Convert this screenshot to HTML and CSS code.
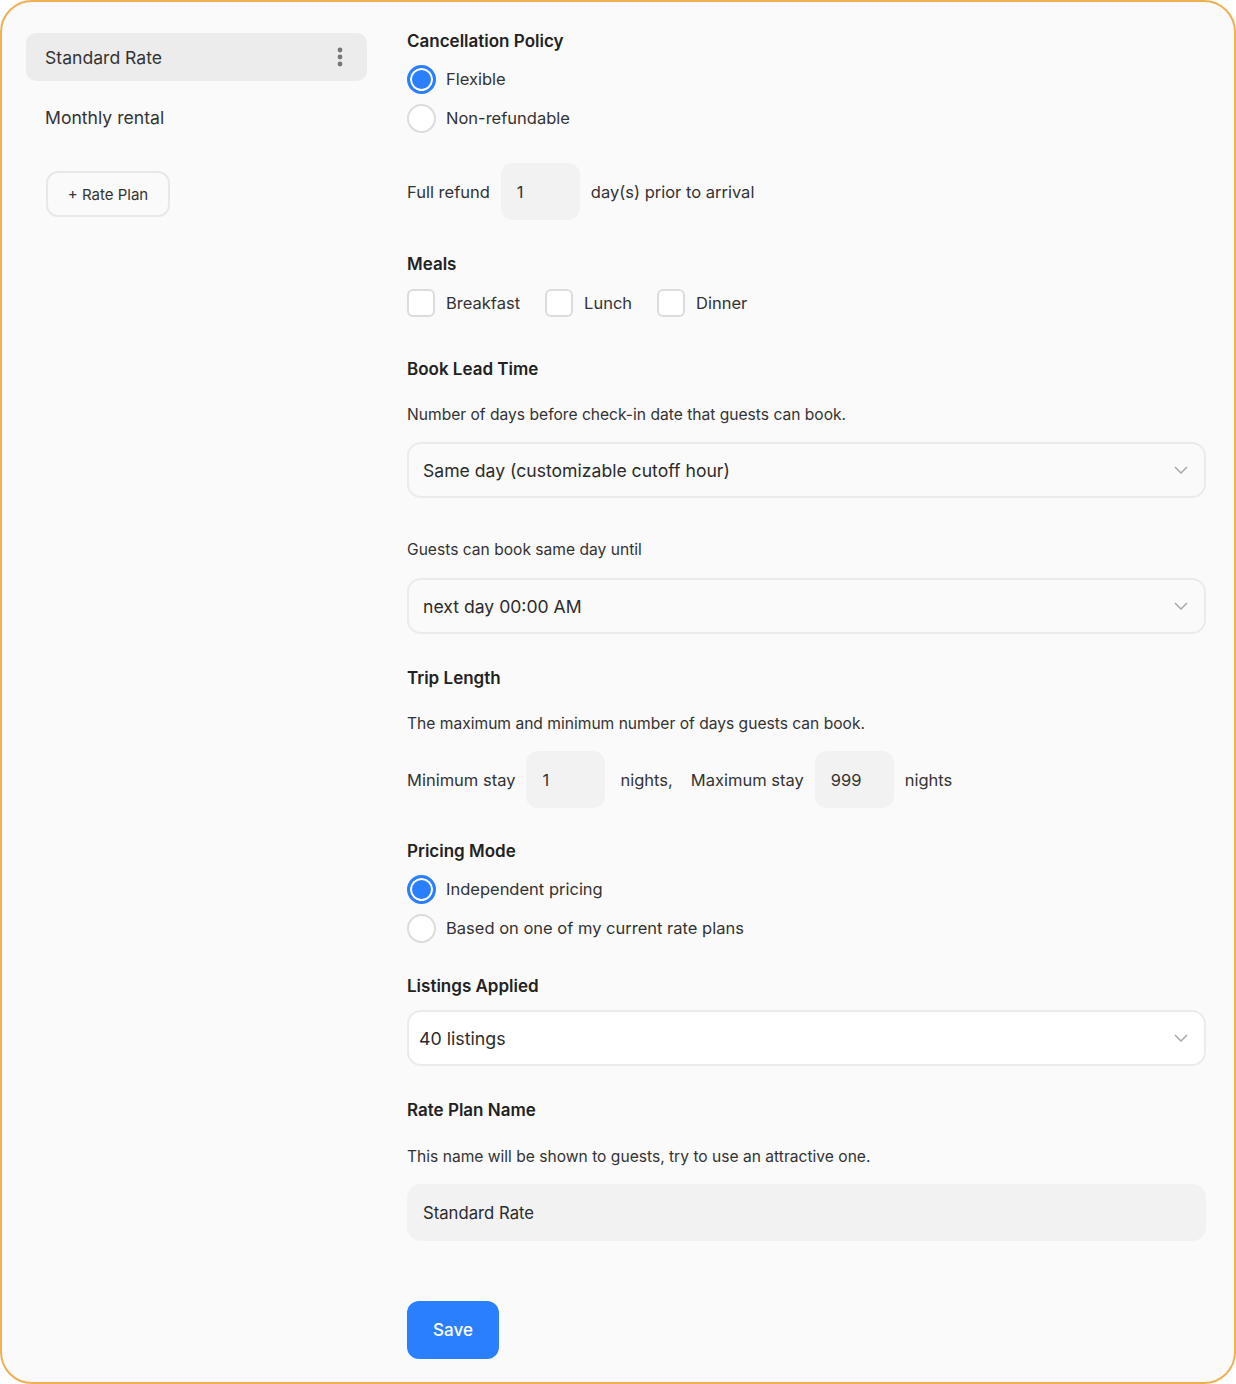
FILE: index.html
```html
<!DOCTYPE html>
<html lang="en">
<head>
<meta charset="utf-8">
<title>Rate Plans</title>
<link rel="stylesheet" href="styles.css">
</head>
<body>
<div class="frame">
  <aside class="sidebar">
    <div class="plan-item active">
      <span>Standard Rate</span>
      <svg class="kebab" width="6" height="20" viewBox="0 0 6 20"><circle cx="3" cy="3" r="2.4"/><circle cx="3" cy="10" r="2.4"/><circle cx="3" cy="17" r="2.4"/></svg>
    </div>
    <div class="plan-item"><span>Monthly rental</span></div>
    <button class="add-btn">+ Rate Plan</button>
  </aside>

  <main class="main">
    <h3 class="heading h-first">Cancellation Policy</h3>
    <div class="radio-group">
      <label class="option"><span class="radio checked"></span>Flexible</label>
      <label class="option"><span class="radio"></span>Non-refundable</label>
    </div>
    <div class="inline-row refund-row">
      <span>Full refund</span>
      <span class="num-box">1</span>
      <span>day(s) prior to arrival</span>
    </div>

    <h3 class="heading h-meals">Meals</h3>
    <div class="check-row">
      <label class="option"><span class="checkbox"></span>Breakfast</label>
      <label class="option"><span class="checkbox"></span>Lunch</label>
      <label class="option"><span class="checkbox"></span>Dinner</label>
    </div>

    <h3 class="heading h-lead">Book Lead Time</h3>
    <p class="desc">Number of days before check-in date that guests can book.</p>
    <div class="select">
      <span>Same day (customizable cutoff hour)</span>
      <svg class="chev" width="14" height="8" viewBox="0 0 14 8"><path d="M1 1l6 6 6-6"/></svg>
    </div>
    <p class="desc desc-gap">Guests can book same day until</p>
    <div class="select select-2">
      <span>next day 00:00 AM</span>
      <svg class="chev" width="14" height="8" viewBox="0 0 14 8"><path d="M1 1l6 6 6-6"/></svg>
    </div>

    <h3 class="heading">Trip Length</h3>
    <p class="desc">The maximum and minimum number of days guests can book.</p>
    <div class="inline-row trip-row">
      <span>Minimum stay</span>
      <span class="num-box">1</span>
      <span class="after">nights,</span>
      <span class="gap-l">Maximum stay</span>
      <span class="num-box">999</span>
      <span>nights</span>
    </div>

    <h3 class="heading h-pricing">Pricing Mode</h3>
    <div class="radio-group">
      <label class="option"><span class="radio checked"></span>Independent pricing</label>
      <label class="option"><span class="radio"></span>Based on one of my current rate plans</label>
    </div>

    <h3 class="heading h-list">Listings Applied</h3>
    <div class="select select-white">
      <span>40 listings</span>
      <svg class="chev" width="14" height="8" viewBox="0 0 14 8"><path d="M1 1l6 6 6-6"/></svg>
    </div>

    <h3 class="heading">Rate Plan Name</h3>
    <p class="desc desc-rpn">This name will be shown to guests, try to use an attractive one.</p>
    <div class="text-input">Standard Rate</div>

    <button class="save-btn">Save</button>
  </main>
</div>
</body>
</html>
```

FILE: styles.css
```css
* { box-sizing: border-box; }
html, body { margin: 0; padding: 0; background: #ffffff; }
body {
  font-family: Inter, "Noto Sans", "Liberation Sans", sans-serif;
  color: #2e2e2e;
  width: 1236px;
  height: 1384px;
}
.frame {
  width: 1236px;
  height: 1384px;
  border: 2px solid #eeaf55;
  border-radius: 32px;
  background: #fafafa;
  display: grid;
  grid-template-columns: 341px 799px;
  column-gap: 40px;
  padding: 28px 28px 0 24px;
  align-items: start;
}
.sidebar {
  padding-top: 3px;
  display: flex;
  flex-direction: column;
  gap: 12px;
}
.plan-item {
  height: 48px;
  border-radius: 10px;
  padding: 0 20px 0 19px;
  display: flex;
  align-items: center;
  justify-content: space-between;
  font-size: 17.6px;
  color: #333;
}
.plan-item.active { background: #ececec; }
.kebab { fill: #777; margin-right: 4px; }
.add-btn {
  align-self: flex-start;
  margin-top: 18px;
  margin-left: 20px;
  width: 124px;
  height: 46px;
  border: 2px solid #e8e8e8;
  border-radius: 12px;
  background: #fafafa;
  font-family: inherit;
  font-size: 15px;
  color: #333;
}
.main { display: flex; flex-direction: column; align-items: flex-start; }
.heading {
  margin: 33px 0 0;
  font-size: 17px;
  line-height: 22px;
  font-weight: 600;
  color: #222;
}
.h-first { margin-top: 0; }
.h-lead { margin-top: 40px; }
.h-pricing { margin-top: 32px; }
.h-list { margin-top: 32px; }
.radio-group {
  margin-top: 12px;
  display: flex;
  flex-direction: column;
  gap: 9px;
}
.option {
  display: flex;
  align-items: center;
  height: 30px;
  font-size: 16.5px;
  color: #333;
}
.radio {
  width: 29px;
  height: 29px;
  border-radius: 50%;
  border: 2px solid #dcdcdc;
  background: #fff;
  margin-right: 10px;
  flex: none;
}
.radio.checked {
  border: 3px solid #2a7fff;
  background: #2a7fff;
  box-shadow: inset 0 0 0 2px #fff;
}
.inline-row {
  display: flex;
  align-items: center;
  font-size: 16.5px;
  color: #333;
}
.refund-row { margin-top: 30px; gap: 11px; }
.num-box {
  height: 57px;
  width: 79px;
  border-radius: 12px;
  background: #f2f2f2;
  display: flex;
  align-items: center;
  padding-left: 16px;
  font-size: 16.5px;
}
.check-row {
  margin-top: 13px;
  display: flex;
  gap: 25px;
}
.checkbox {
  width: 28px;
  height: 28px;
  border-radius: 6px;
  border: 2px solid #dcdcdc;
  background: #fff;
  margin-right: 11px;
  flex: none;
}
.desc {
  margin: 25px 0 0;
  font-size: 15.6px;
  line-height: 20px;
  color: #333;
}
.desc-gap { margin-top: 42px; }
.desc-rpn { margin-top: 26px; }
.select {
  margin-top: 17px;
  width: 799px;
  height: 56px;
  border: 2px solid #ebebeb;
  border-radius: 14px;
  background: #fafafa;
  display: flex;
  align-items: center;
  justify-content: space-between;
  padding: 0 16px 0 14px;
  font-size: 17.6px;
  color: #2b2b2b;
}
.select-2 { margin-top: 18px; }
.select-white { background: #fff; margin-top: 13px; padding-left: 10px; font-size: 17.8px; }
.chev { fill: none; stroke: #a8a8a8; stroke-width: 1.5; }
.trip-row { margin-top: 17px; gap: 11px; }
.trip-row .after { margin-left: 4px; }
.trip-row .gap-l { margin-left: 7px; }
.text-input {
  margin-top: 17px;
  width: 799px;
  height: 57px;
  border-radius: 14px;
  background: #f2f2f2;
  display: flex;
  align-items: center;
  padding-left: 16px;
  font-size: 16.7px;
  color: #2b2b2b;
}
.save-btn {
  margin-top: 60px;
  width: 92px;
  height: 58px;
  border: none;
  border-radius: 12px;
  background: #2a7fff;
  color: #fff;
  font-family: inherit;
  font-size: 17px;
  font-weight: 500;
}
```
